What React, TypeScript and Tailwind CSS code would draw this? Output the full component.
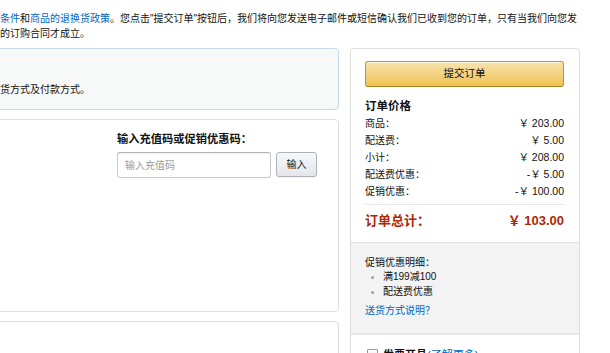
import React from 'react';

const priceRows = [
  { label: '商品：', value: '￥ 203.00' },
  { label: '配送费：', value: '￥ 5.00' },
  { label: '小计：', value: '￥ 208.00' },
  { label: '配送费优惠：', value: '-￥ 5.00' },
  { label: '促销优惠：', value: '-￥ 100.00' },
];

const promoItems = ['满199减100', '配送费优惠'];

export default function App() {
  return (
    <div className="w-[610px] h-[353px] overflow-hidden bg-white text-[#111] font-['Liberation_Sans','Noto_Sans_CJK_SC',sans-serif]">
      {/* page is scrolled sideways, so the left column starts off screen */}
      <div className="w-[740px] -ml-[160px] pt-[11px]">
        <p className="text-[10px] leading-[15px] whitespace-nowrap">
          您同意亚马逊网站的隐私声明、
          <a className="text-[#0066c0]">使用条件</a>和
          <a className="text-[#0066c0]">商品的退换货政策</a>
          。您点击"提交订单"按钮后，我们将向您发送电子邮件或短信确认我们已收到您的订单，只有当我们向您发
          <br />
          出发货确认的邮件或短信后我们之间的订购合同才成立。
        </p>

        <div className="mt-[7px] flex items-start gap-[11px]">
          {/* left column */}
          <div className="w-[499px] flex flex-col">
            <div className="h-[62px] border border-[#c6dbe5] rounded-[4px] bg-[#f7f8f8] pl-[9px] pt-[12px]">
              <div className="text-[11px] leading-[15px] font-bold whitespace-nowrap">重要提示</div>
              <div className="mt-[6px] text-[10px] leading-[15px] whitespace-nowrap">
                请在提交订单前仔细核对地址、送货方式及付款方式。
              </div>
            </div>

            <div className="mt-[9px] h-[193px] border border-[#ddd] rounded-[4px] bg-white flex justify-between pl-[9px] pt-[11px]">
              <div className="text-[11px] leading-[17px] font-bold whitespace-nowrap">付款方式</div>
              <div className="w-[200px] mr-[21px]">
                <div className="text-[11.25px] leading-[17px] font-bold whitespace-nowrap">输入充值码或促销优惠码：</div>
                <div className="mt-[4px] flex gap-[5px]">
                  <input
                    type="text"
                    placeholder="输入充值码"
                    className="w-[154px] h-[26px] px-[7px] border border-[#c9c9c9] border-t-[#b5b5b5] rounded-[3px] text-[10px] shadow-[inset_0_1px_1px_rgba(0,0,0,0.06)] placeholder:text-[#9a9a9a] outline-none"
                  />
                  <button className="w-[41px] h-[25px] border border-[#adb1b8] rounded-[3px] bg-linear-to-b from-[#f7f8fa] to-[#e4e6ea] text-[10px] text-[#111] shadow-[0_1px_0_rgba(0,0,0,0.05)]">
                    输入
                  </button>
                </div>
              </div>
            </div>

            <div className="mt-[9px] h-[100px] border border-[#ddd] rounded-[4px] bg-white" />
          </div>

          {/* right column: order summary */}
          <div className="w-[230px] border border-[#ddd] rounded-[4px] overflow-hidden bg-white">
            <div className="pl-[14px] pr-[15px] pt-[11px] pb-[11px]">
              <button className="w-full h-[26px] border border-[#c8961d] border-b-[#a7801f] rounded-[3px] bg-linear-to-b from-[#f8e3ad] to-[#efc24e] text-[10.5px] text-[#111] shadow-[inset_0_1px_0_rgba(255,255,255,0.5)]">
                提交订单
              </button>

              <h3 className="mt-[11px] text-[11.5px] leading-[17px] font-bold">订单价格</h3>
              {priceRows.map((row) => (
                <div key={row.label} className="flex justify-between leading-[17px]">
                  <span className="text-[10px]">{row.label}</span>
                  <span className="text-[10.5px]">{row.value}</span>
                </div>
              ))}

              <div className="mt-[4px] border-t border-[#e7e7e7]" />

              <div className="mt-[6px] flex justify-between items-center leading-[20px] text-[13px] font-bold text-[#b12704]">
                <span>订单总计：</span>
                <span>￥ 103.00</span>
              </div>
            </div>

            <div className="border-t border-[#ddd] border-b-2 border-b-[#e6e6e6] bg-[#f3f3f3] pl-[14px] pr-[15px] pt-[13px] pb-[15px] text-[10px] leading-[14.5px]">
              <div>促销优惠明细：</div>
              <ul>
                {promoItems.map((item) => (
                  <li key={item} className="flex items-center">
                    <span className="ml-[6px] w-[3px] h-[3px] rounded-full bg-[#a0a0a0]" />
                    <span className="ml-[9px]">{item}</span>
                  </li>
                ))}
              </ul>
              <a className="block mt-[4.5px] text-[#0066c0]">送货方式说明？</a>
            </div>

            <div className="pl-[16px] pt-[13px] h-[40px] flex items-start gap-[5px]">
              <span className="mt-[1px] w-[11px] h-[11px] border border-[#9a9a9a] rounded-[1px] bg-linear-to-b from-[#fff] to-[#e3e3e3]" />
              <span className="text-[11px] leading-[14px] font-bold">
                发票开具<a className="font-normal text-[#0066c0]">(了解更多)</a>
              </span>
            </div>
          </div>
        </div>
      </div>
    </div>
  );
}
